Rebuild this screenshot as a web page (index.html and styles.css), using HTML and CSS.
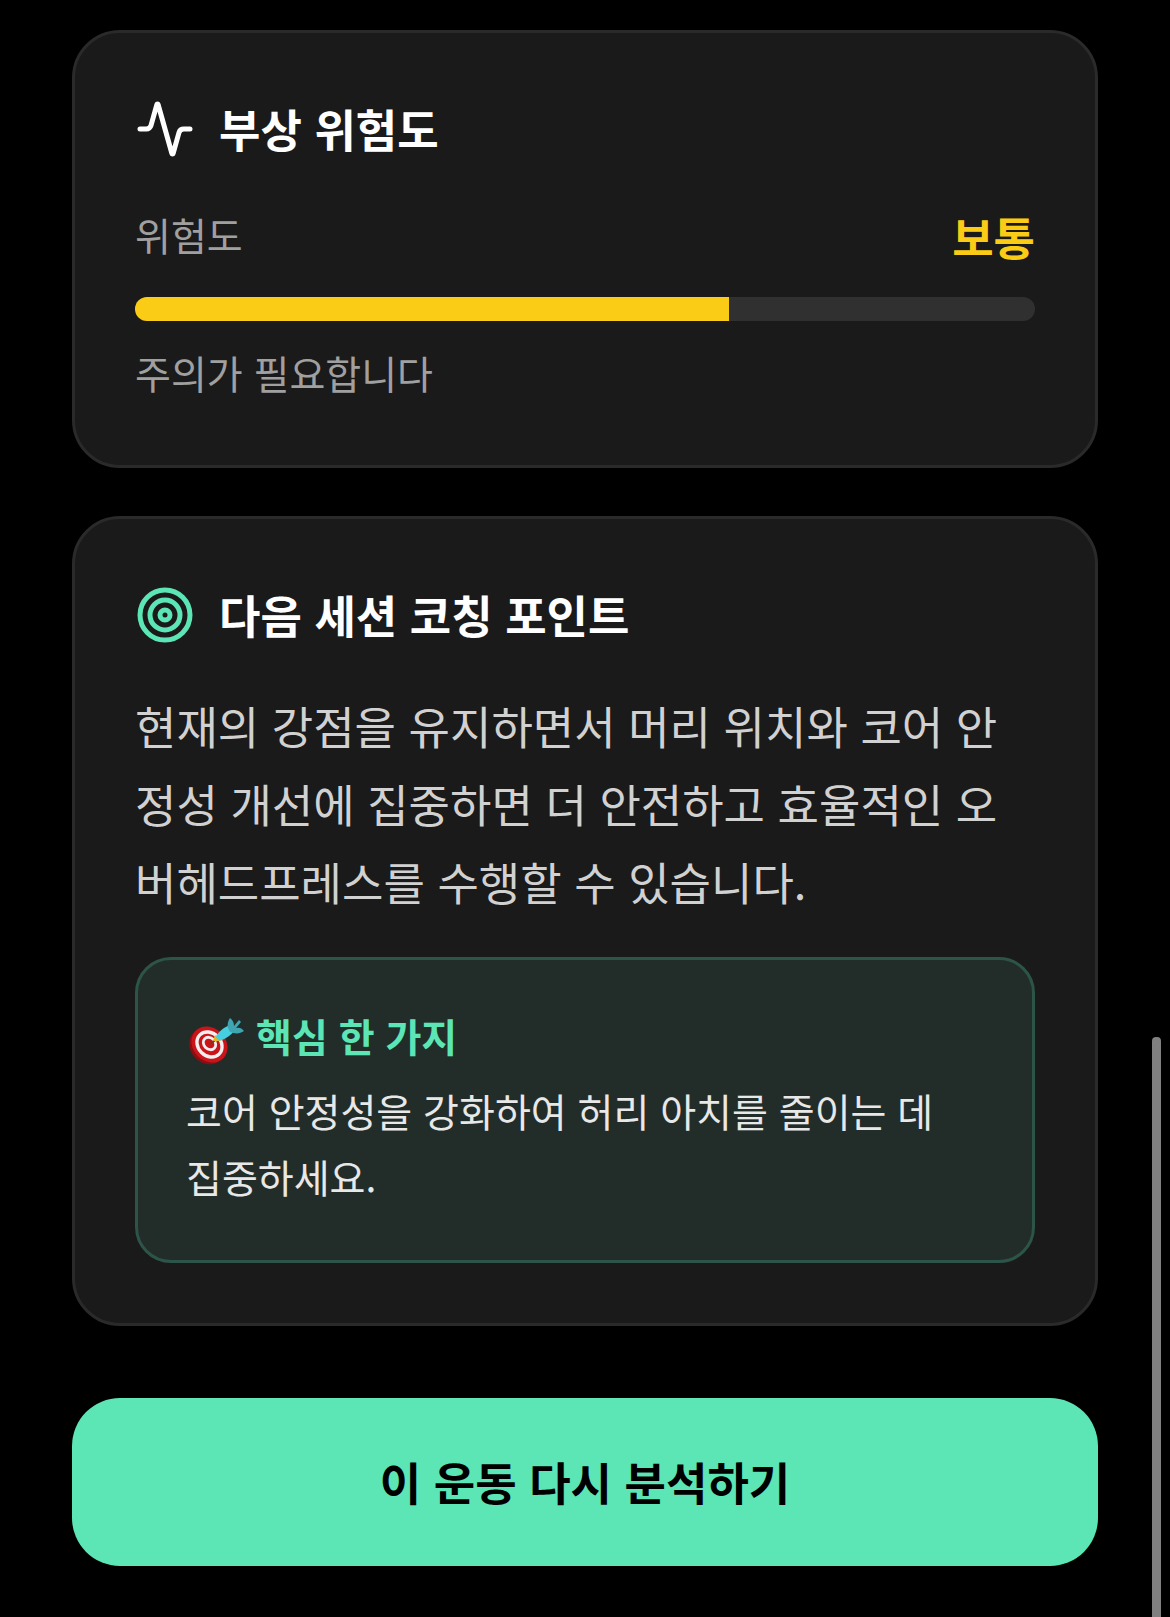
FILE: index.html
```html
<!DOCTYPE html>
<html lang="ko">

<head>
  <meta charset="UTF-8">
  <meta name="viewport" content="width=device-width, initial-scale=1.0">
  <title>운동 분석 결과</title>
  <link rel="stylesheet" href="styles.css">
</head>

<body>
  <main class="page">
    <section class="card">
      <h2 class="card-title">
        <svg class="icon" viewBox="0 0 24 24" aria-hidden="true">
          <path d="M22 12h-2.48a2 2 0 0 0-1.93 1.46l-2.35 8.36a.25.25 0 0 1-.48 0L9.24 2.18a.25.25 0 0 0-.48 0l-2.35 8.36A2 2 0 0 1 4.49 12H2"/>
        </svg>
        부상 위험도
      </h2>
      <div class="risk-row">
        <span class="risk-label">위험도</span>
        <strong class="risk-value">보통</strong>
      </div>
      <div class="risk-bar" role="meter" aria-label="위험도" aria-valuemin="0" aria-valuemax="100" aria-valuenow="66">
        <div class="risk-fill" style="width: 66%"></div>
      </div>
      <p class="risk-note">주의가 필요합니다</p>
    </section>

    <section class="card">
      <h2 class="card-title">
        <svg class="icon icon-accent" viewBox="0 0 24 24" aria-hidden="true">
          <circle cx="12" cy="12" r="10"/>
          <circle cx="12" cy="12" r="6"/>
          <circle cx="12" cy="12" r="2"/>
        </svg>
        다음 세션 코칭 포인트
      </h2>
      <p class="coaching">현재의 강점을 유지하면서 머리 위치와 코어 안정성 개선에 집중하면 더 안전하고 효율적인 오버헤드프레스를 수행할 수 있습니다.</p>
      <div class="key-point">
        <h3 class="key-title">
          <svg class="dart" viewBox="0 -3 60 60" aria-hidden="true">
            <ellipse cx="21.5" cy="38" rx="19.5" ry="17" transform="rotate(45 21.5 38)" fill="#8f0d12"/>
            <ellipse cx="23.5" cy="36.5" rx="19.5" ry="16.5" transform="rotate(45 23.5 36.5)" fill="#c9141a"/>
            <ellipse cx="23.5" cy="36.5" rx="13.6" ry="11.4" transform="rotate(45 23.5 36.5)" fill="none" stroke="#f4eeee" stroke-width="3.4"/>
            <ellipse cx="23.5" cy="35.5" rx="6.8" ry="5.6" transform="rotate(45 23.5 35.5)" fill="none" stroke="#f4eeee" stroke-width="2.8"/>
            <path d="M24 36l7-5" stroke="#7d3a12" stroke-width="2"/>
            <path d="M27 33l2-6 6 6z" fill="#e8b71c"/>
            <path d="M30 28c4-6 9-9 14-11l5 5c-4 5-8 8-14 10.500-3 0-5-2-5-4.500z" fill="#45cfe0"/>
            <path d="M42 20c-1-4 0-7 2-10 3 2 4 5 4 8l5-6 2 2-5 6c3-1 6 0 8 3-4 3-9 3-14 1z" fill="#3fa5b2"/>
          </svg>
          핵심 한 가지
        </h3>
        <p class="key-text">코어 안정성을 강화하여 허리 아치를 줄이는 데 집중하세요.</p>
      </div>
    </section>

    <button type="button" class="retry-btn">이 운동 다시 분석하기</button>
  </main>

  <div class="scroll-thumb"></div>
</body>

</html>
```

FILE: styles.css
```css
* {
  box-sizing: border-box;
}

body {
  margin: 0;
  background-color: #000;
  color: #fff;
  font-family: "Noto Sans CJK KR", sans-serif;
  font-size: 39px;
  line-height: 60px;
}

h2,
h3,
p {
  margin: 0;
}

.page {
  display: flex;
  flex-direction: column;
  gap: 48px;
  padding: 30px 72px 48px;
}

.card {
  padding: 60px;
  background-color: #1a1a1a;
  border: 3px solid #2a2a2a;
  border-radius: 48px;
}

.card-title {
  display: flex;
  align-items: center;
  gap: 24px;
  margin-bottom: 36px;
  font-size: 45px;
  font-weight: bold;
  line-height: 72px;
}

.icon {
  width: 60px;
  height: 60px;
  flex-shrink: 0;
  fill: none;
  stroke: currentColor;
  stroke-width: 2;
  stroke-linecap: round;
  stroke-linejoin: round;
}

.icon-accent {
  color: #5ce5b5;
}

.risk-row {
  display: flex;
  justify-content: space-between;
  align-items: flex-start;
  margin-bottom: 24px;
}

.risk-label,
.risk-note {
  color: #a0a0a0;
}

.risk-label {
  line-height: 66px;
}

.risk-value {
  color: #facc15;
  font-size: 45px;
  line-height: 72px;
}

.risk-bar {
  height: 24px;
  margin-bottom: 24px;
  background-color: #303030;
  border-radius: 12px;
  overflow: hidden;
}

.risk-fill {
  height: 100%;
  background-color: #facc15;
}

.risk-note {
  padding-bottom: 6px;
  line-height: 54px;
}

.coaching {
  margin-bottom: 36px;
  color: #d1d1d1;
  font-size: 45px;
  line-height: 78px;
}

.key-point {
  padding: 45px 48px 51px;
  background-color: #222d2a;
  border: 3px solid #2d5448;
  border-radius: 36px;
}

.key-title {
  display: flex;
  align-items: center;
  gap: 10px;
  margin-bottom: 12px;
  color: #5ce5b5;
  font-size: 39px;
  font-weight: bold;
}

.dart {
  width: 60px;
  height: 60px;
  flex-shrink: 0;
}

.key-text {
  color: #e8e8e8;
  line-height: 66px;
  word-break: keep-all;
}

.retry-btn {
  margin-top: 24px;
  padding: 48px;
  background-color: #5ce5b5;
  color: #000;
  border: none;
  border-radius: 48px;
  font-family: inherit;
  font-size: 45px;
  font-weight: bold;
  line-height: 72px;
  cursor: pointer;
}

/* overlay scroll indicator */
.scroll-thumb {
  position: fixed;
  top: 1037px;
  right: 9px;
  bottom: 0;
  width: 9px;
  background-color: #808080;
  border-radius: 4px 4px 0 0;
}
```
